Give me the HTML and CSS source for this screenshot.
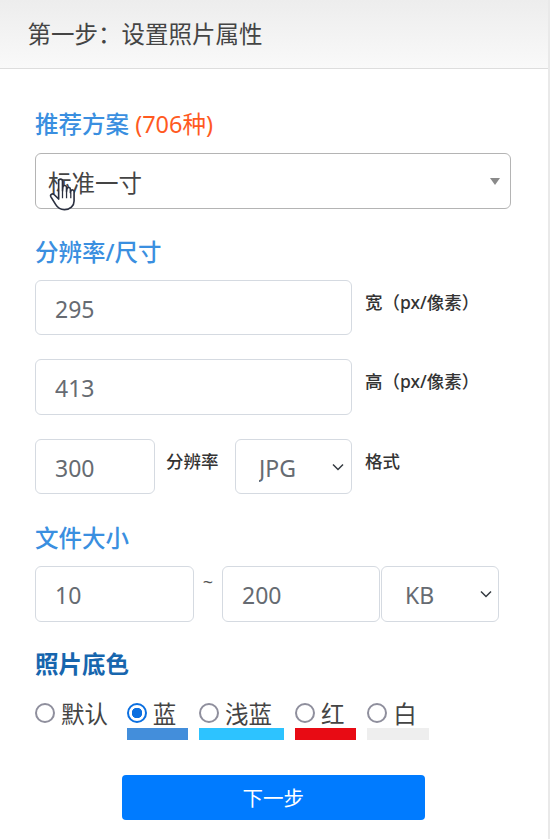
FILE: index.html
```html
<!DOCTYPE html>
<html lang="zh-CN">

<head>
    <meta charset="UTF-8">
    <meta name="viewport" content="width=device-width, initial-scale=1.0">
    <title>设置照片属性</title>
    <link rel="stylesheet" href="styles.css">
</head>

<body>
    <div class="panel">
        <header class="panel-head">第一步：设置照片属性</header>

        <form class="panel-body">
            <h2 class="title first">推荐方案 <span class="count">(706种)</span></h2>
            <div class="select-wrap preset">
                <select class="preset-select">
                    <option>标准一寸</option>
                </select>
                <span class="caret"></span>
                <svg class="hand" viewBox="0 0 28 36" width="27" height="33" preserveAspectRatio="none">
                    <path d="M10 3.5c0-3 4-3 4 0V14l.4-4c.4-2.6 3.8-2.2 3.8.4V15l.4-3c.5-2.4 3.6-2 3.6.5V16l.5-1.800c.7-2 3.300-1.400 3.300.8V25c0 5.500-4 9.500-10 9.500-4.500 0-7-2-9-5.500L2 20.500c-1.300-2.400 1.800-4.200 3.500-2.200L10 23z" fill="#fff" stroke="#2b3040" stroke-width="1.700" stroke-linejoin="round"/>
                    <path d="M14 14v8M18.200 15v7M22.600 16v6" fill="none" stroke="#2b3040" stroke-width="1.300"/>
                </svg>
            </div>

            <h2 class="title">分辨率/尺寸</h2>
            <div class="rows">
                <div class="row">
                    <input class="field wide" type="text" value="295">
                    <span class="hint">宽（px/像素）</span>
                </div>
                <div class="row">
                    <input class="field wide" type="text" value="413">
                    <span class="hint">高（px/像素）</span>
                </div>
                <div class="row">
                    <input class="field dpi" type="text" value="300">
                    <span class="hint dpi-hint">分辨率</span>
                    <div class="select-wrap format">
                        <select class="field pick">
                            <option>JPG</option>
                        </select>
                        <svg class="chevron" viewBox="0 0 12 8" width="12" height="8">
                            <path d="M1 1.500l5 5 5-5" fill="none" stroke="#343a40" stroke-width="1.500"/>
                        </svg>
                    </div>
                    <span class="hint">格式</span>
                </div>
            </div>

            <h2 class="title">文件大小</h2>
            <div class="row size-row">
                <input class="field size-min" type="text" value="10">
                <span class="tilde">~</span>
                <input class="field size-max" type="text" value="200">
                <div class="select-wrap unit">
                    <select class="field pick">
                        <option>KB</option>
                    </select>
                    <svg class="chevron" viewBox="0 0 12 8" width="12" height="8">
                        <path d="M1 1.500l5 5 5-5" fill="none" stroke="#343a40" stroke-width="1.500"/>
                    </svg>
                </div>
            </div>

            <h2 class="title dark">照片底色</h2>
            <div class="colors">
                <label class="color first">
                    <span class="color-line"><input type="radio" name="bg"> 默认</span>
                </label>
                <label class="color">
                    <span class="color-line"><input type="radio" name="bg" checked> 蓝</span>
                    <span class="swatch blue"></span>
                </label>
                <label class="color">
                    <span class="color-line"><input type="radio" name="bg"> 浅蓝</span>
                    <span class="swatch sky"></span>
                </label>
                <label class="color">
                    <span class="color-line"><input type="radio" name="bg"> 红</span>
                    <span class="swatch red"></span>
                </label>
                <label class="color">
                    <span class="color-line"><input type="radio" name="bg"> 白</span>
                    <span class="swatch white"></span>
                </label>
            </div>

            <button class="next" type="button">下一步</button>
        </form>
    </div>
</body>

</html>
```

FILE: styles.css
```css
* {
    box-sizing: border-box;
}

html,
body {
    height: 100%;
}

body {
    font-family: "Noto Sans", "Noto Sans CJK SC", sans-serif;
    background-color: #fff;
    margin: 0;
    padding: 0;
    overflow: hidden;
}

.panel {
    width: 550px;
    height: 100%;
    border-right: 2px solid #e9e9e9;
}

.panel-head {
    height: 69px;
    padding-left: 27.500px;
    line-height: 68px;
    font-size: 23.5px;
    color: #444;
    background: linear-gradient(#ededed, #f9f9f9);
    border-bottom: 1.5px solid #ddd;
}

.panel-body {
    padding: 41px 0 0 35px;
}

.title {
    height: 28px;
    margin: 0 0 14px;
    line-height: 28px;
    font-size: 23.5px;
    font-weight: 500;
    color: #3a8fe0;
    white-space: nowrap;
}

.title.first {
    margin-bottom: 15px;
}

.title.dark {
    margin-bottom: 20.500px;
    color: #1766ae;
    font-weight: 700;
}

.count {
    color: #ff5a1f;
    font-weight: 400;
}

.select-wrap {
    position: relative;
}

.preset {
    width: 476px;
    height: 55.500px;
    margin-bottom: 29px;
}

.preset-select {
    width: 100%;
    height: 100%;
    padding: 4px 0 0 12px;
    font: inherit;
    font-size: 23.5px;
    color: #444;
    background: #fff;
    border: 1.5px solid #b4b4b4;
    border-radius: 6px;
    appearance: none;
}

.caret {
    position: absolute;
    top: 25px;
    right: 11px;
    border-left: 5.5px solid transparent;
    border-right: 5.5px solid transparent;
    border-top: 7px solid #8a8a8a;
}

.hand {
    position: absolute;
    left: 14px;
    top: 25px;
}

.rows {
    display: flex;
    flex-direction: column;
    gap: 24px;
    margin-bottom: 30px;
}

.row {
    display: flex;
    align-items: flex-start;
    height: 55.500px;
}

.field {
    height: 55.500px;
    padding: 3px 0 0 19px;
    font: inherit;
    font-size: 23px;
    color: #666b72;
    background: #fff;
    border: 1.5px solid #d5dae1;
    border-radius: 6px;
    outline: none;
}

.wide {
    width: 317px;
    margin-right: 13px;
}

.dpi {
    width: 120px;
    margin-right: 11px;
}

.hint {
    margin-top: 11px;
    line-height: 22px;
    font-size: 17.5px;
    font-weight: 500;
    color: #333;
    white-space: nowrap;
}

.dpi-hint {
    width: 69px;
}

.format {
    width: 117px;
    margin-right: 13px;
}

.pick {
    width: 100%;
    padding-left: 23px;
    appearance: none;
}

.chevron {
    position: absolute;
    top: 24px;
    right: 8px;
}

.size-row {
    margin-bottom: 28.500px;
}

.size-min {
    width: 159px;
}

.tilde {
    width: 28px;
    padding-top: 2px;
    line-height: 28px;
    font-size: 18px;
    text-align: center;
    color: #555;
}

.size-max {
    width: 158px;
    margin-right: 1px;
}

.unit {
    width: 118px;
}

.unit .chevron {
    right: 7px;
}

.colors {
    display: flex;
    gap: 10.800px;
}

.color {
    display: block;
    padding-right: 12px;
    font-size: 23.5px;
    color: #444;
    position: relative;
}

.color.first {
    padding-right: 8px;
}

.color-line {
    display: flex;
    align-items: center;
    gap: 6px;
    height: 28px;
    white-space: nowrap;
}

.color-line input {
    width: 20px;
    height: 20px;
    margin: 0;
    border: 2.500px solid #8f8f9d;
    border-radius: 50%;
    background: #fff;
    appearance: none;
}

.color-line input:checked {
    border-color: #0b6fe0;
    background: radial-gradient(circle, #0b6fe0 0 5px, #fff 5.500px);
}

.swatch {
    position: absolute;
    left: 0;
    right: 0;
    top: 29px;
    height: 12px;
}

.blue {
    background-color: #438edb;
}

.sky {
    background-color: #2dc3ff;
}

.red {
    background-color: #e80b14;
}

.white {
    background-color: #eeeeee;
}

.next {
    display: block;
    width: 302.500px;
    height: 45px;
    margin: 48px 0 0 87px;
    padding: 0;
    font: inherit;
    font-size: 20.500px;
    color: #fff;
    background-color: #007bff;
    border: none;
    border-radius: 4px;
}
```
